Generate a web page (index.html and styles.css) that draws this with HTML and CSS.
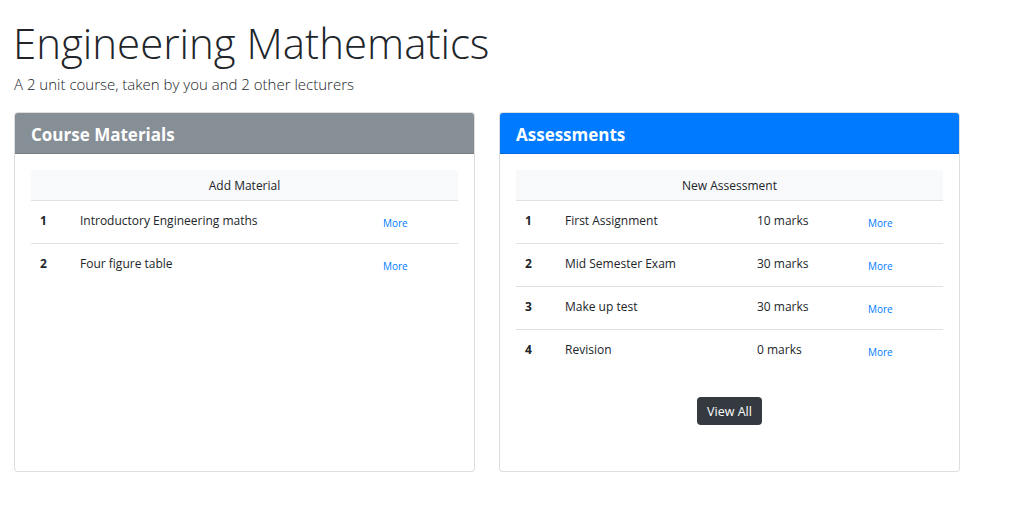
FILE: index.html
```html
<!DOCTYPE html>
<html lang="en">
<head>
<meta charset="utf-8">
<title>Engineering Mathematics</title>
<link rel="stylesheet" href="styles.css">
</head>
<body>
<main class="page">
  <header class="intro">
    <h1 class="title">Engineering Mathematics</h1>
    <p class="subtitle">A 2 unit course, taken by you and 2 other lecturers</p>
  </header>
  <div class="panels">
    <section class="card">
      <div class="card-head head-secondary"><h2 class="card-title">Course Materials</h2></div>
      <div class="card-body">
        <div class="tbl">
          <div class="tbl-head">Add Material</div>
          <div class="tbl-row">
            <span class="num">1</span><span class="name">Introductory Engineering maths</span><span class="marks"></span><a class="more" href="#">More</a>
          </div>
          <div class="tbl-row">
            <span class="num">2</span><span class="name">Four figure table</span><span class="marks"></span><a class="more" href="#">More</a>
          </div>
        </div>
      </div>
    </section>
    <section class="card">
      <div class="card-head head-primary"><h2 class="card-title">Assessments</h2></div>
      <div class="card-body">
        <div class="tbl">
          <div class="tbl-head">New Assessment</div>
          <div class="tbl-row">
            <span class="num">1</span><span class="name">First Assignment</span><span class="marks">10 marks</span><a class="more" href="#">More</a>
          </div>
          <div class="tbl-row">
            <span class="num">2</span><span class="name">Mid Semester Exam</span><span class="marks">30 marks</span><a class="more" href="#">More</a>
          </div>
          <div class="tbl-row">
            <span class="num">3</span><span class="name">Make up test</span><span class="marks">30 marks</span><a class="more" href="#">More</a>
          </div>
          <div class="tbl-row">
            <span class="num">4</span><span class="name">Revision</span><span class="marks">0 marks</span><a class="more" href="#">More</a>
          </div>
        </div>
        <div class="actions"><a class="btn-dark" href="#">View All</a></div>
      </div>
    </section>
  </div>
</main>
</body>
</html>
```
FILE: styles.css
```css
* { box-sizing: border-box; }

html, body {
  margin: 0;
  padding: 0;
  background: #fff;
}

body {
  font-family: "Open Sans", "Noto Sans", sans-serif;
  color: #212529;
}

.page {
  padding: 18px 14px 0 14px;
}

.intro {
  display: flex;
  flex-direction: column;
}

.title {
  margin: 0 0 0 -1px;
  font-size: 42px;
  line-height: 50px;
  font-weight: 300;
  color: #212529;
}

.subtitle {
  margin: 6px 0 0 0;
  font-size: 15px;
  line-height: 20px;
  font-weight: 300;
}

.panels {
  margin-top: 18px;
  display: grid;
  grid-template-columns: 461px 461px;
  column-gap: 24px;
  align-items: stretch;
}

.card {
  border: 1px solid rgba(0, 0, 0, 0.13);
  border-radius: 4px;
  display: flex;
  flex-direction: column;
  background: #fff;
}

.card-head {
  padding: 10px 16px 6px 16px;
  border-bottom: 1px solid rgba(0, 0, 0, 0.125);
  border-radius: 3px 3px 0 0;
  color: #fff;
}

.head-secondary { background: #868e96; }
.head-primary { background: #007bff; }

.card-title {
  margin: 0;
  font-size: 17px;
  line-height: 24px;
  font-weight: 700;
}

.card-body {
  padding: 16px;
  flex: 1;
}

.tbl {
  display: flex;
  flex-direction: column;
}

.tbl-head {
  height: 30px;
  display: flex;
  align-items: center;
  justify-content: center;
  background: #f8f9fa;
  border-radius: 3px 3px 0 0;
  font-size: 12px;
}

.tbl-row {
  display: grid;
  grid-template-columns: 40px 192px 111px 1fr;
  height: 43px;
  padding-left: 9px;
  border-top: 1px solid #dee2e6;
  font-size: 12px;
  line-height: 18px;
}

.tbl-row > span {
  padding-top: 11px;
}

.num {
  font-weight: 700;
}

.more {
  padding-top: 15px;
  font-size: 10px;
  line-height: 14px;
  color: #007bff;
  text-decoration: none;
}

.actions {
  display: flex;
  justify-content: center;
  margin-top: 25px;
  margin-bottom: 30px;
}

.btn-dark {
  display: inline-flex;
  align-items: center;
  height: 28px;
  padding: 0 10px;
  border-radius: 4px;
  background: #343a40;
  color: #fff;
  font-size: 12.5px;
  text-decoration: none;
}
```
